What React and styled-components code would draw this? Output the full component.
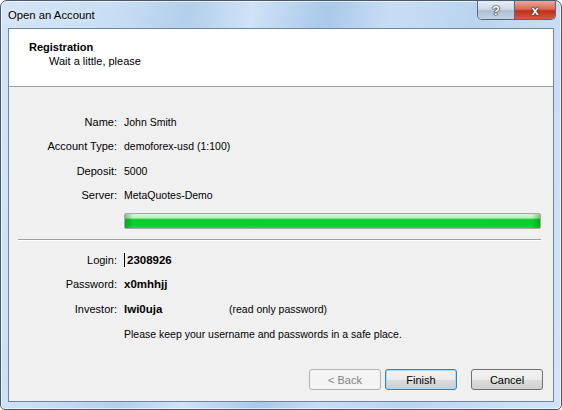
import React from "react";
import styled, { createGlobalStyle, css } from "styled-components";

const GlobalStyle = createGlobalStyle`
  html, body {
    margin: 0;
    padding: 0;
    background: #ffffff;
  }
  body {
    font-family: "Liberation Sans", Arial, sans-serif;
    font-size: 11px;
    color: #000;
  }
`;

const Window = styled.div`
  width: 562px;
  height: 410px;
  box-sizing: border-box;
  border: 1px solid #4a5a6e;
  border-radius: 7px 7px 5px 5px;
  background: linear-gradient(
    100deg,
    #d4e5f6 0%,
    #c9def4 18%,
    #b3cfec 30%,
    #cfe2f6 40%,
    #a9c8ea 52%,
    #c8ddf4 62%,
    #bad4ef 75%,
    #d3e5f7 100%
  );
  box-shadow: inset 0 0 0 1px rgba(255, 255, 255, 0.6);
  display: flex;
  flex-direction: column;
  overflow: hidden;
`;

const TitleBar = styled.div`
  height: 27px;
  display: flex;
  align-items: flex-start;
  padding-left: 7px;
`;

const Title = styled.div`
  font-size: 11.3px;
  line-height: 14px;
  margin-top: 7px;
  color: #000;
  text-shadow: 0 0 6px rgba(255, 255, 255, 0.9);
`;

const CaptionButtons = styled.div`
  margin-left: auto;
  margin-right: 5px;
  display: flex;
  border: 1px solid #56677c;
  border-top: none;
  border-radius: 0 0 5px 5px;
  overflow: hidden;
  height: 18px;
`;

const CaptionButton = styled.div`
  height: 18px;
  display: flex;
  align-items: center;
  justify-content: center;
  color: #fff;
  font-weight: bold;
  font-size: 13px;
  text-shadow: 0 0 1px #222, 0 0 1px #222, 0 0 2px #333;
  ${(p) =>
    p.$close
      ? css`
          width: 40px;
          background: linear-gradient(#e8a898 0%, #d96a55 45%, #c1301b 55%, #d45a45 100%);
        `
      : css`
          width: 36px;
          border-right: 1px solid #56677c;
          background: linear-gradient(#e6eef7 0%, #cdd9e6 45%, #aebfd2 55%, #c2d3e4 100%);
        `}
`;

const Client = styled.div`
  flex: 1;
  margin: 0 7px 7px 7px;
  border: 1px solid #6f86a2;
  background: #f0f0f0;
  display: flex;
  flex-direction: column;
`;

const Header = styled.div`
  height: 58px;
  background: #fff;
  border-bottom: 1px solid #a0a0a0;
  padding: 11px 0 0 20px;
  box-sizing: border-box;
  line-height: 14px;
`;

const HeaderTitle = styled.div`
  font-weight: bold;
`;

const HeaderSub = styled.div`
  padding-left: 20px;
`;

const Body = styled.div`
  flex: 1;
  padding-top: 23px;
  display: flex;
  flex-direction: column;
`;

const Grid = styled.div`
  display: grid;
  grid-template-columns: 108px 1fr;
  column-gap: 7px;
  grid-auto-rows: ${(p) => p.$row}px;
  align-items: center;
`;

const Label = styled.div`
  text-align: right;
`;

const Value = styled.div`
  display: flex;
  align-items: center;
  font-weight: ${(p) => (p.$bold ? "bold" : "normal")};
  font-size: ${(p) => (p.$bold ? "11.5px" : "10.5px")};
`;

const Secret = styled.span`
  width: 105px;
  font-weight: bold;
  font-size: 11.5px;
`;

const Caret = styled.span`
  width: 1px;
  height: 14px;
  background: #000;
  margin-right: 2px;
`;

const Progress = styled.div`
  margin: 6px 12px 0 115px;
  height: 16px;
  box-sizing: border-box;
  border: 1px solid #a8a8a8;
  border-radius: 2px;
  background:
    linear-gradient(90deg, rgba(0, 90, 20, 0.35) 0, rgba(0, 90, 20, 0) 8px, rgba(0, 90, 20, 0) calc(100% - 8px), rgba(0, 90, 20, 0.35) 100%),
    linear-gradient(#d6f8d6 0%, #b9f0b9 28%, #0bcf2e 40%, #06d02b 75%, #1bd93d 100%);
`;

const Separator = styled.div`
  margin: 10px 12px 6px 9px;
  height: 0;
  border-top: 1px solid #a0a0a0;
  border-bottom: 1px solid #fff;
`;

const Buttons = styled.div`
  margin-top: auto;
  display: flex;
  justify-content: flex-end;
  padding: 0 10px 11px 0;
`;

const Button = styled.div`
  width: 72px;
  height: 21px;
  box-sizing: border-box;
  border: 1px solid #707070;
  border-radius: 3px;
  display: flex;
  align-items: center;
  justify-content: center;
  background: linear-gradient(#f2f2f2 0%, #ebebeb 50%, #dddddd 51%, #cfcfcf 100%);
  margin-left: ${(p) => p.$gap || 0}px;
  ${(p) =>
    p.$disabled &&
    css`
      border-color: #adb2b5;
      background: #f4f4f4;
      color: #838383;
    `}
  ${(p) =>
    p.$default &&
    css`
      border-color: #3c7fb1;
      box-shadow: inset 0 0 0 1px #a6dcf6;
    `}
`;

const info = [
  ["Name:", "John Smith"],
  ["Account Type:", "demoforex-usd (1:100)"],
  ["Deposit:", "5000"],
  ["Server:", "MetaQuotes-Demo"],
];

export default function App() {
  return (
    <>
      <GlobalStyle />
      <Window>
        <TitleBar>
          <Title>Open an Account</Title>
          <CaptionButtons>
            <CaptionButton>?</CaptionButton>
            <CaptionButton $close>x</CaptionButton>
          </CaptionButtons>
        </TitleBar>
        <Client>
          <Header>
            <HeaderTitle>Registration</HeaderTitle>
            <HeaderSub>Wait a little, please</HeaderSub>
          </Header>
          <Body>
            <Grid $row={24.3}>
              {info.map(([l, v]) => (
                <React.Fragment key={l}>
                  <Label>{l}</Label>
                  <Value>{v}</Value>
                </React.Fragment>
              ))}
            </Grid>
            <Progress />
            <Separator />
            <Grid $row={24.7}>
              <Label>Login:</Label>
              <Value $bold>
                <Caret />
                2308926
              </Value>
              <Label>Password:</Label>
              <Value $bold>x0mhhjj</Value>
              <Label>Investor:</Label>
              <Value>
                <Secret>lwi0uja</Secret>
                (read only password)
              </Value>
              <Label />
              <Value>Please keep your username and passwords in a safe place.</Value>
            </Grid>
            <Buttons>
              <Button $disabled>&lt; Back</Button>
              <Button $default $gap={4}>Finish</Button>
              <Button $gap={14}>Cancel</Button>
            </Buttons>
          </Body>
        </Client>
      </Window>
    </>
  );
}
